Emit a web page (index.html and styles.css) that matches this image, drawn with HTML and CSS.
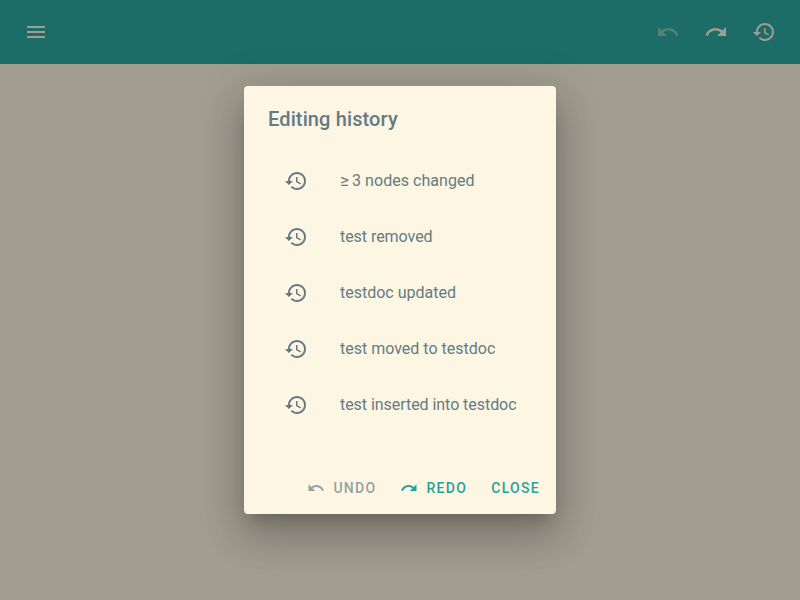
FILE: index.html
```html
<!DOCTYPE html>
<html lang="en">
<head>
<meta charset="utf-8">
<title>Editing history</title>
<link rel="stylesheet" href="styles.css">
</head>
<body>
<svg class="defs" aria-hidden="true">
  <symbol id="menu" viewBox="0 0 24 24"><path d="M3 18h18v-2H3v2zm0-5h18v-2H3v2zm0-7v2h18V6H3z"/></symbol>
  <symbol id="undo" viewBox="0 0 24 24"><path d="M12.5 8c-2.65 0-5.05.99-6.9 2.6L2 7v9h9l-3.62-3.62c1.39-1.16 3.16-1.88 5.12-1.88 3.54 0 6.55 2.31 7.6 5.5l2.37-.78C21.08 11.03 17.15 8 12.5 8z"/></symbol>
  <symbol id="redo" viewBox="0 0 24 24"><path d="M18.4 10.6C16.55 8.99 14.15 8 11.5 8c-4.65 0-8.58 3.03-9.96 7.22L3.9 16c1.05-3.19 4.05-5.5 7.6-5.5 1.95 0 3.73.72 5.12 1.88L13 16h9V7l-3.6 3.6z"/></symbol>
  <symbol id="history" viewBox="0 0 24 24"><path d="M13 3c-4.97 0-9 4.03-9 9H1l3.89 3.89.07.14L9 12H6c0-3.87 3.13-7 7-7s7 3.13 7 7-3.13 7-7 7c-1.93 0-3.68-.79-4.94-2.06l-1.42 1.42C8.27 19.99 10.51 21 13 21c4.97 0 9-4.03 9-9s-4.03-9-9-9zm-1 5v5l4.28 2.54.72-1.21-3.5-2.08V8H12z"/></symbol>
</svg>
<header class="bar">
  <svg class="icon"><use href="#menu"/></svg>
  <div class="actions">
    <svg class="icon faded"><use href="#undo"/></svg>
    <svg class="icon"><use href="#redo"/></svg>
    <svg class="icon"><use href="#history"/></svg>
  </div>
</header>
<div class="scrim">
  <section class="dialog">
    <h2 class="title">Editing history</h2>
    <ul class="list">
      <li class="item"><svg class="icon"><use href="#history"/></svg><span class="label first"><span class="sign">≥</span> 3 nodes changed</span></li>
      <li class="item"><svg class="icon"><use href="#history"/></svg><span class="label">test removed</span></li>
      <li class="item"><svg class="icon"><use href="#history"/></svg><span class="label wide">testdoc updated</span></li>
      <li class="item"><svg class="icon"><use href="#history"/></svg><span class="label wide">test moved to testdoc</span></li>
      <li class="item"><svg class="icon"><use href="#history"/></svg><span class="label">test inserted into testdoc</span></li>
    </ul>
    <footer class="buttons">
      <button class="button" disabled><svg class="small"><use href="#undo"/></svg>Undo</button>
      <button class="button"><svg class="small"><use href="#redo"/></svg>Redo</button>
      <button class="button">Close</button>
    </footer>
  </section>
</div>
</body>
</html>
```
FILE: styles.css
```css
* { box-sizing: border-box; }
body {
  margin: 0;
  height: 100vh;
  overflow: hidden;
  background: #eee8d5;
  font-family: Roboto, sans-serif;
  color: #657b83;
}
.defs { display: none; }
.icon { width: 24px; height: 24px; fill: currentColor; flex: none; }
.small { width: 18px; height: 18px; fill: currentColor; margin-right: 8px; }
.bar {
  height: 64px;
  padding: 0 24px;
  display: flex;
  align-items: center;
  justify-content: space-between;
  background: #2aa198;
  color: #eee8d5;
}
.actions { display: flex; gap: 24px; }
.faded { opacity: .42; }
.scrim {
  position: absolute;
  inset: 0;
  display: flex;
  align-items: center;
  justify-content: center;
  background: rgba(0, 0, 0, .32);
}
.dialog {
  width: 312px;
  height: 428px;
  display: flex;
  flex-direction: column;
  border-radius: 4px;
  background: #fdf6e3;
  box-shadow: 0 11px 15px -7px rgba(0, 0, 0, .2), 0 24px 38px 3px rgba(0, 0, 0, .14), 0 9px 46px 8px rgba(0, 0, 0, .12);
}
.title {
  margin: 0;
  padding: 17px 24px 0;
  font-size: 20px;
  line-height: 32px;
  font-weight: 500;
  letter-spacing: .125px;
}
.list { margin: 18px 0 0; padding: 0 24px; list-style: none; }
.item {
  height: 56px;
  padding: 0 16px;
  display: flex;
  align-items: center;
  gap: 32px;
  font-size: 16px;
  line-height: 20px;
  white-space: nowrap;
}
.label { letter-spacing: -.05px; }
.wide { letter-spacing: 0; }
.first { letter-spacing: .05px; }
.sign {
  display: inline-block;
  width: 8px;
  font-size: 17px;
  line-height: 1;
}
.buttons {
  margin-top: auto;
  height: 52px;
  padding: 8px;
  display: flex;
  align-items: center;
  justify-content: flex-end;
  gap: 8px;
}
.button {
  height: 36px;
  padding: 0 8px;
  display: flex;
  align-items: center;
  border: 0;
  background: none;
  color: #2aa198;
  font: 500 14px Roboto, sans-serif;
  letter-spacing: 1.3px;
  text-transform: uppercase;
}
.button:disabled { color: #93a1a1; }
```
